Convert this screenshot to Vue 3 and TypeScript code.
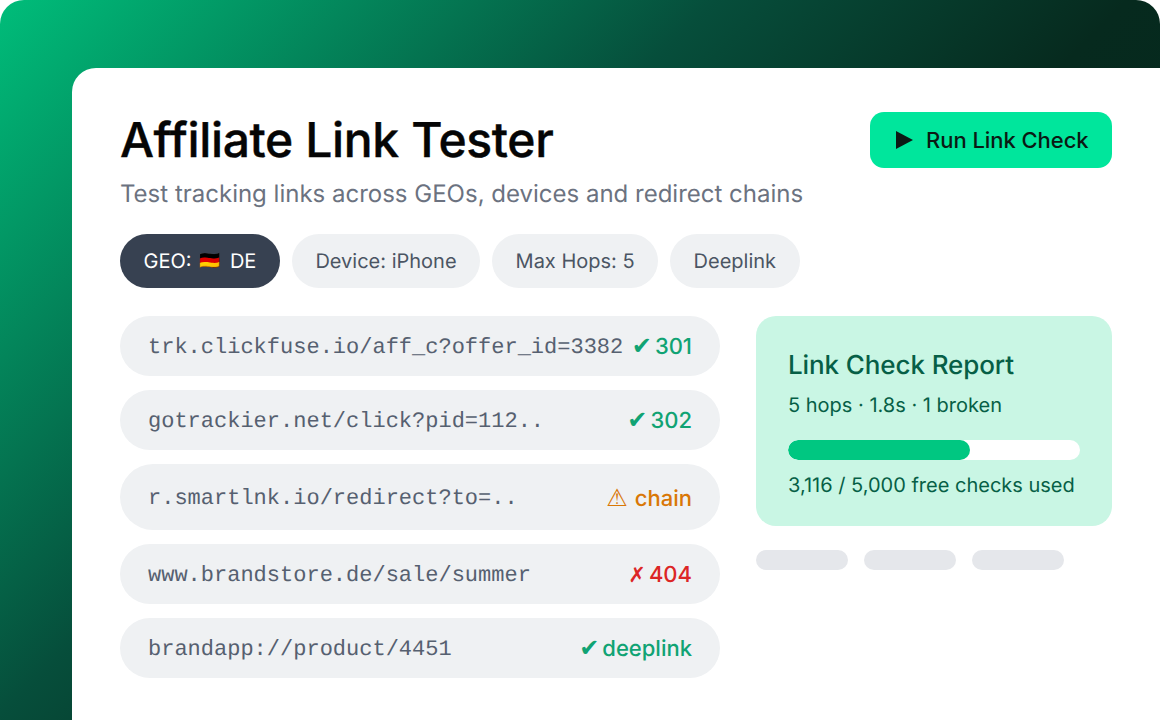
<script setup lang="ts">
interface LinkRow {
  url: string
  mark: string
  label: string
  tone: 'ok' | 'warn' | 'bad'
}

const chips = ['Device: iPhone', 'Max Hops: 5', 'Deeplink']

const rows: LinkRow[] = [
  { url: 'trk.clickfuse.io/aff_c?offer_id=3382', mark: '✔', label: '301', tone: 'ok' },
  { url: 'gotrackier.net/click?pid=112..', mark: '✔', label: '302', tone: 'ok' },
  { url: 'r.smartlnk.io/redirect?to=..', mark: '⚠', label: 'chain', tone: 'warn' },
  { url: 'www.brandstore.de/sale/summer', mark: '✗', label: '404', tone: 'bad' },
  { url: 'brandapp://product/4451', mark: '✔', label: 'deeplink', tone: 'ok' },
]

const used = 3116
const total = 5000
const usedPct = (used / total) * 100
</script>

<template>
  <div class="frame">
    <main class="card">
      <header class="top">
        <div>
          <h1>Affiliate Link Tester</h1>
          <p class="sub">Test tracking links across GEOs, devices and redirect chains</p>
        </div>
        <button class="run">
          <svg width="17" height="18" viewBox="0 0 17 18"><path d="M0 0 L17 9 L0 18 Z" fill="#0b1a14" /></svg>
          Run Link Check
        </button>
      </header>

      <div class="chips">
        <span class="chip active">GEO: <span class="flag">🇩🇪</span> DE</span>
        <span v-for="c in chips" :key="c" class="chip">{{ c }}</span>
      </div>

      <div class="body">
        <div class="links">
          <div v-for="r in rows" :key="r.url" class="row" :class="{ tall: r.tone === 'warn' }">
            <span class="url">{{ r.url }}</span>
            <span class="status" :class="r.tone"><span class="mark">{{ r.mark }}</span>{{ r.label }}</span>
          </div>
        </div>
        <aside class="side">
          <section class="report">
            <h2>Link Check Report</h2>
            <p class="stats">5 hops · 1.8s · 1 broken</p>
            <div class="bar"><div class="fill" :style="{ width: usedPct + '%' }"></div></div>
            <p class="used">3,116 / 5,000 free checks used</p>
          </section>
          <div class="skeletons">
            <span class="skel"></span>
            <span class="skel"></span>
            <span class="skel"></span>
          </div>
        </aside>
      </div>
    </main>
  </div>
</template>

<style>
html, body { margin: 0; background: #fff; }
</style>

<style scoped>
.frame {
  width: 1160px;
  height: 720px;
  box-sizing: border-box;
  padding: 68px 0 0 72px;
  border-radius: 24px 24px 0 0;
  background: linear-gradient(135deg, #00bd7a 0%, #064e3b 38%, #062a1e 60%, #05241a 100%);
  overflow: hidden;
  font-family: Inter, "Noto Sans", sans-serif;
  text-rendering: geometricPrecision;
}
.card {
  height: 652px;
  box-sizing: border-box;
  padding: 44px 48px 0;
  background: #fff;
  border-radius: 24px 0 0 0;
}
.top {
  display: flex;
  justify-content: space-between;
  align-items: flex-start;
}
h1 {
  margin: 0;
  font-size: 48px;
  line-height: 56px;
  font-weight: 500;
  letter-spacing: -0.36px;
  -webkit-text-stroke: 0.4px #050505;
  color: #050505;
}
.sub {
  margin: 10px 0 0;
  font-size: 24px;
  line-height: 32px;
  color: #6b7280;
}
.run {
  display: flex;
  align-items: center;
  gap: 13px;
  height: 56px;
  width: 242px;
  margin: 0;
  padding: 0 26px;
  border: 0;
  border-radius: 14px;
  background: #00e69c;
  color: #0b1a14;
  font-family: inherit;
  font-size: 22px;
  font-weight: 500;
  letter-spacing: -0.05px;
  white-space: nowrap;
}
.run svg { flex: none; }
.chips {
  display: flex;
  gap: 12px;
  margin-top: 24px;
}
.chip {
  height: 54px;
  padding: 0 23.5px;
  display: flex;
  align-items: center;
  border-radius: 27px;
  background: #eff1f3;
  color: #4b5563;
  font-size: 20px;
  font-weight: 400;
  white-space: pre;
}
.chip.active {
  background: #374151;
  color: #fff;
}
.flag {
  font-size: 17px;
  margin: 0 4px 0 2px;
}
.body {
  display: flex;
  gap: 36px;
  margin-top: 28px;
}
.links {
  width: 600px;
  display: flex;
  flex-direction: column;
  gap: 14px;
}
.row {
  display: flex;
  align-items: center;
  justify-content: space-between;
  height: 60px;
  padding: 0 28px;
  border-radius: 30px;
  background: #eff1f3;
}
.row.tall { height: 66px; border-radius: 33px; }
.url {
  margin-top: 2px;
  font-family: "Liberation Mono", monospace;
  font-size: 22px;
  color: #566070;
}
.status {
  margin-top: 2px;
  font-size: 22px;
  font-weight: 500;
  white-space: nowrap;
}
.status.warn { margin-top: 4px; }
.mark {
  font-family: "DejaVu Sans", sans-serif;
  font-size: 24px;
  font-weight: 400;
  line-height: 1;
  margin-right: 3px;
}
.warn .mark { font-size: 24px; margin-right: 7px; }
.bad .mark { font-size: 21px; margin-right: 3px; }
.ok { color: #10a373; }
.warn { color: #d97706; }
.bad { color: #dc2626; }
.side { width: 356px; }
.report {
  height: 210px;
  box-sizing: border-box;
  padding: 33px 32px 32px;
  border-radius: 20px;
  background: #c9f6e4;
  color: #065f46;
}
h2 {
  margin: 0;
  font-size: 26px;
  line-height: 34px;
  font-weight: 500;
  letter-spacing: -0.1px;
}
.stats {
  margin: 8px 0 0;
  font-size: 20px;
  line-height: 28px;
}
.bar {
  height: 20px;
  margin-top: 21px;
  border-radius: 10px;
  background: #fff;
  overflow: hidden;
}
.fill {
  height: 100%;
  border-radius: 10px;
  background: #00c781;
}
.used {
  margin: 11px 0 0;
  font-size: 20px;
  line-height: 28px;
}
.skeletons {
  display: flex;
  gap: 16px;
  margin-top: 24px;
}
.skel {
  width: 92px;
  height: 20px;
  border-radius: 10px;
  background: #e5e7eb;
}
</style>
